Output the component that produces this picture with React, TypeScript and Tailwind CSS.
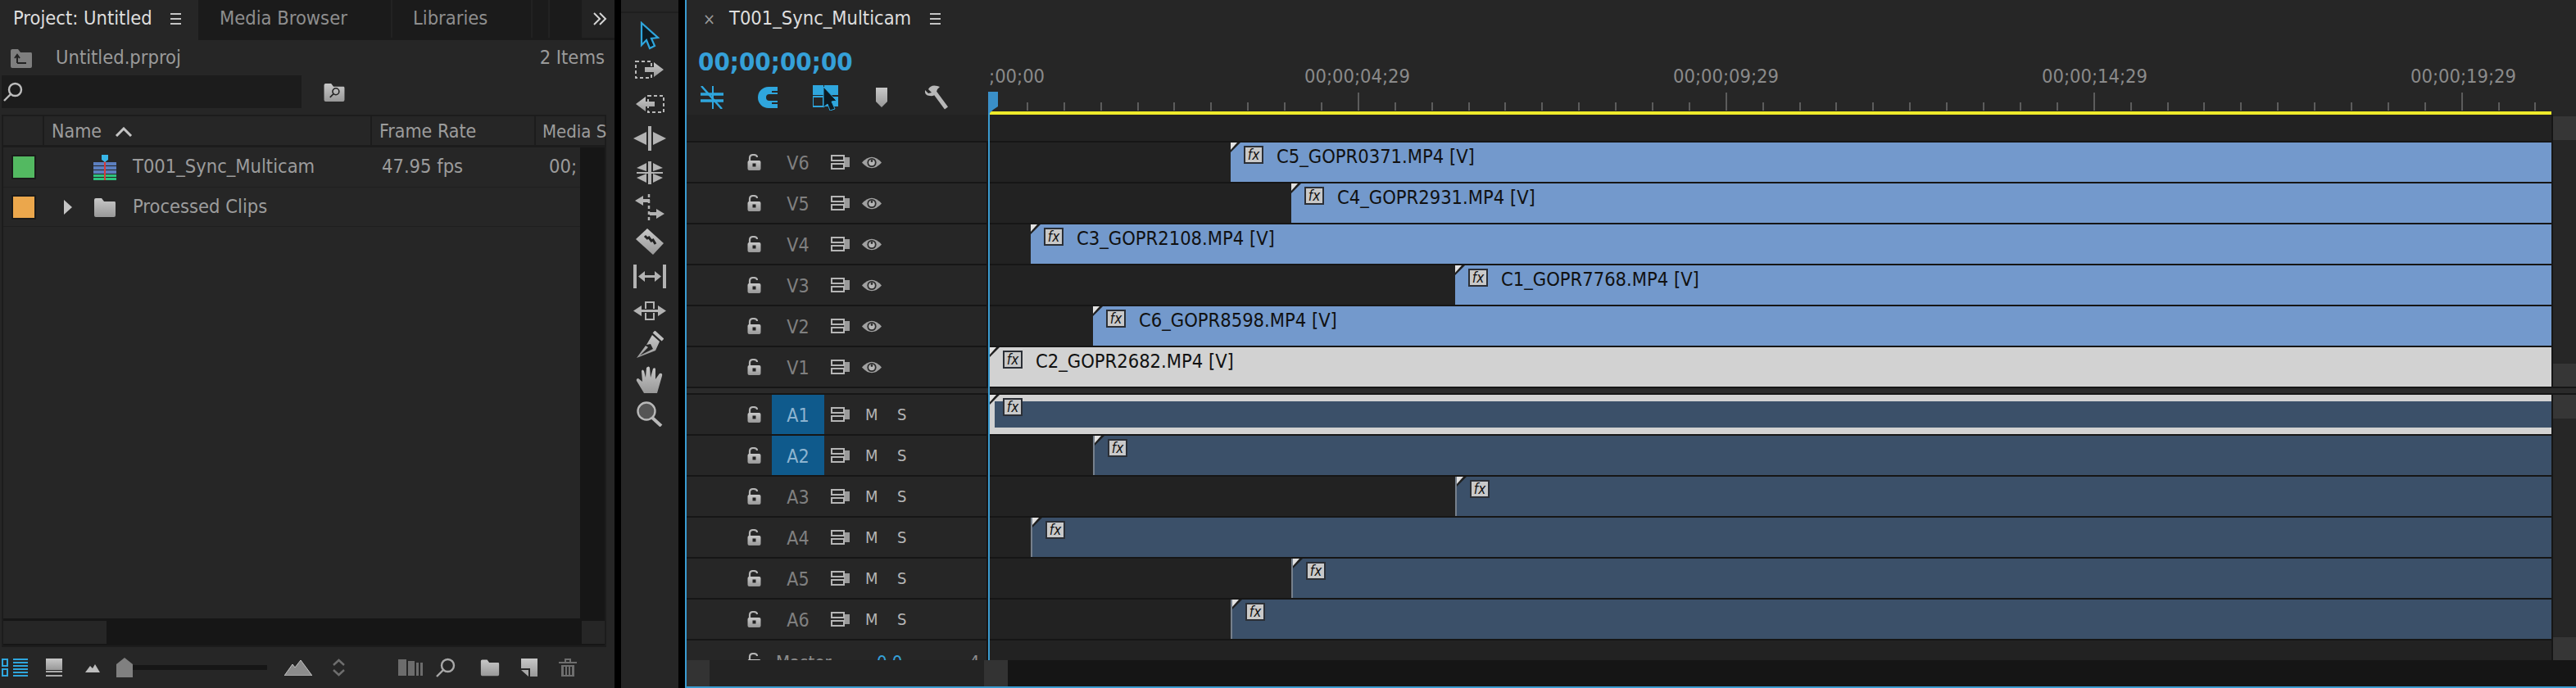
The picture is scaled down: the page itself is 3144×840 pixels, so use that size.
import React from "react";

const grey = "#b2b2b2";
const blue = "#2fa6dd";

const videoTracks = [
  { name: "V6", start: 294, clip: "C5_GOPR0371.MP4 [V]" },
  { name: "V5", start: 368, clip: "C4_GOPR2931.MP4 [V]" },
  { name: "V4", start: 50, clip: "C3_GOPR2108.MP4 [V]" },
  { name: "V3", start: 568, clip: "C1_GOPR7768.MP4 [V]" },
  { name: "V2", start: 126, clip: "C6_GOPR8598.MP4 [V]" },
  { name: "V1", start: 0, clip: "C2_GOPR2682.MP4 [V]", selected: true },
];

const audioTracks = [
  { name: "A1", start: 0, target: true, selected: true },
  { name: "A2", start: 126, target: true },
  { name: "A3", start: 568 },
  { name: "A4", start: 50 },
  { name: "A5", start: 368 },
  { name: "A6", start: 294 },
];

const rulerLabels = ["00;00;04;29", "00;00;09;29", "00;00;14;29", "00;00;19;29"];
const ticks = Array.from({ length: 43 }, (_, i) => i);

function MenuIcon({ className = "" }: { className?: string }) {
  return (
    <div className={"flex h-[14px] w-[13px] flex-col justify-between " + className}>
      <div className="h-[2px] bg-[#c4c4c4]" />
      <div className="h-[2px] bg-[#c4c4c4]" />
      <div className="h-[2px] bg-[#c4c4c4]" />
    </div>
  );
}

function Magnifier({ size = 24, color = "#bdbdbd" }: { size?: number; color?: string }) {
  return (
    <svg width={size} height={size} viewBox="0 0 24 24" fill="none">
      <circle cx="14.5" cy="9.5" r="7.5" stroke={color} strokeWidth="2.4" />
      <path d="M9 15 L1 23" stroke={color} strokeWidth="2.4" />
    </svg>
  );
}

function Folder({ w = 28, h = 24, color = "url(#metal)", children }: { w?: number; h?: number; color?: string; children?: React.ReactNode }) {
  return (
    <svg width={w} height={h} viewBox="0 0 28 24">
      <path d="M1 3 Q1 1 3 1 H10 L13 5 H26 Q27 5 27 7 V22 Q27 24 25 24 H3 Q1 24 1 22 Z" fill={color} />
      {children}
    </svg>
  );
}

function LockIcon() {
  return (
    <svg width="17" height="20" viewBox="0 0 17 20">
      <path d="M3 8 V5 Q3 1 7.5 1 Q12 1 12 4" fill="none" stroke="#b5b5b5" strokeWidth="2.2" />
      <rect x="0.5" y="8" width="16" height="12" rx="2" fill="url(#metal)" />
      <rect x="6.5" y="11.5" width="4" height="4" fill="#222" />
    </svg>
  );
}

function SyncIcon() {
  return (
    <svg width="24" height="18" viewBox="0 0 24 18" fill="none">
      <rect x="16" y="3" width="7" height="12" fill="#9a9a9a" />
      <rect x="1" y="1" width="15" height="6" fill="#262626" stroke="#b5b5b5" strokeWidth="2" />
      <rect x="1" y="11" width="15" height="6" fill="#262626" stroke="#b5b5b5" strokeWidth="2" />
    </svg>
  );
}

function EyeIcon() {
  return (
    <svg width="24" height="17" viewBox="0 0 24 17">
      <path d="M0 8.5 Q12 -5 24 8.5 Q12 22 0 8.5 Z" fill="#a0a0a0" />
      <circle cx="12" cy="8.5" r="5.6" fill="#2a2a2a" />
      <circle cx="12" cy="8.5" r="3.8" fill="#b5b5b5" />
      <circle cx="12" cy="6.5" r="1.4" fill="#2a2a2a" />
    </svg>
  );
}

function FxBadge({ className = "" }: { className?: string }) {
  return (
    <div className={"flex h-[22px] w-[24px] items-center justify-center border-2 border-[#2b2f36] bg-[#c9c9c9] text-[17px] leading-none text-[#111] italic " + className}>
      fx
    </div>
  );
}

function ClipCorner() {
  return (
    <svg className="absolute top-0 left-0" width="12" height="12" viewBox="0 0 12 12">
      <polygon points="0,0 12,0 0,12" fill="#1f1f1f" />
      <polygon points="0,0 8,0 0,9" fill="#e2e2e2" />
    </svg>
  );
}

function VideoClip({ label, selected }: { label: string; selected?: boolean }) {
  return (
    <div className={"relative flex h-full flex-1 items-start pt-[4px] pl-[16px] " + (selected ? "bg-[#d2d2d2]" : "bg-[#7399cc]")}>
      <ClipCorner />
      <FxBadge />
      <span className="ml-[16px] text-[23.5px] leading-[26px] whitespace-nowrap text-[#111]">{label}</span>
    </div>
  );
}

function AudioClip({ selected }: { selected?: boolean }) {
  if (selected) {
    return (
      <div className="relative h-full flex-1 bg-[#d2d2d2] py-[8px] pl-[6px]">
        <div className="h-full bg-[#3b5069]" />
        <ClipCorner />
        <FxBadge className="absolute top-[4px] left-[16px]" />
      </div>
    );
  }
  return (
    <div className="relative h-full flex-1 border-l-2 border-[#76808c] bg-[#3b5069]">
      <ClipCorner />
      <FxBadge className="absolute top-[4px] left-[16px]" />
    </div>
  );
}

function TrackHeader({ name, target, audio }: { name: string; target?: boolean; audio?: boolean }) {
  return (
    <div className="flex h-full w-[368px] shrink-0 items-center border-r-2 border-[#161616] bg-[#262626] pl-[74px]">
      <LockIcon />
      <div className={"ml-[13px] flex h-full w-[64px] items-center justify-center pt-[2px] text-[23px] " + (target ? "bg-[#0f5a8c] text-[#8db4d0]" : "text-[#808080]")}>
        {name}
      </div>
      <div className="ml-[8px]">
        <SyncIcon />
      </div>
      {audio ? (
        <>
          <span className="ml-[18px] w-[15px] text-[20px] text-[#b5b5b5]">M</span>
          <span className="ml-[24px] text-[20px] text-[#b5b5b5]">S</span>
        </>
      ) : (
        <div className="ml-[14px]">
          <EyeIcon />
        </div>
      )}
    </div>
  );
}

function ProjectPanel() {
  return (
    <div className="flex h-full w-[750px] shrink-0 flex-col bg-[#262626]">
      <div className="flex h-[49px] shrink-0 bg-[#1b1b1b] pb-[3px]">
        <div className="-mb-[3px] flex w-[242px] items-center bg-[#262626] pb-[3px] pl-[16px] text-[23.5px] text-[#dedede]">
          Project: Untitled
          <MenuIcon className="ml-[22px]" />
        </div>
        <div className="flex w-[237px] items-center border-r-2 border-[#222] pl-[26px] text-[23.5px] text-[#8e8e8e]">Media Browser</div>
        <div className="flex w-[171px] items-center border-r-2 border-[#222] pl-[25px] text-[23.5px] text-[#8e8e8e]">Libraries</div>
        <div className="w-[21px] border-r-2 border-[#222]" />
        <div className="w-[39px]" />
        <div className="flex w-[40px] items-center bg-[#232323] pl-[14px]">
          <svg width="18" height="16" viewBox="0 0 18 16" fill="none" stroke="#d4d4d4" strokeWidth="2">
            <path d="M1 1 L8 8 L1 15 M8 1 L15 8 L8 15" />
          </svg>
        </div>
      </div>
      <div className="flex h-[43px] shrink-0 items-center pr-[12px] pl-[12px] text-[23.5px] text-[#9a9a9a]">
        <Folder w={28} h={24} color="#7e7e7e">
          <path d="M9 18 H20 M9 18 V9 M6 12 L9 8 L12 12" stroke="#222" strokeWidth="2" fill="none" />
        </Folder>
        <span className="ml-[28px]">Untitled.prproj</span>
        <span className="ml-auto">2 Items</span>
      </div>
      <div className="flex h-[40px] shrink-0 items-center">
        <div className="ml-[2px] flex h-full w-[366px] items-center bg-[#1c1c1c] pl-[2px]">
          <Magnifier />
        </div>
        <div className="ml-[26px]">
          <Folder w={28} h={23} color="url(#metal)">
            <g transform="translate(8 6) scale(0.55)">
              <circle cx="14.5" cy="9.5" r="7.5" stroke="#222" strokeWidth="3" fill="none" />
              <path d="M9 15 L1 23" stroke="#222" strokeWidth="3" />
            </g>
          </Folder>
        </div>
      </div>
      <div className="mt-[8px] ml-[2px] flex h-[650px] w-[738px] shrink-0 flex-col border-2 border-[#1c1c1c]">
        <div className="flex h-[35px] shrink-0 text-[23px] text-[#9c9c9c]">
          <div className="w-[50px] border-r-2 border-[#1c1c1c]" />
          <div className="flex w-[400px] items-center border-r-2 border-[#1c1c1c] pt-[2px] pl-[9px]">
            Name
            <svg className="ml-[16px]" width="22" height="12" viewBox="0 0 22 12" fill="none">
              <path d="M2 11 L11 2 L20 11" stroke="#c4c4c4" strokeWidth="3" />
            </svg>
          </div>
          <div className="flex w-[200px] items-center border-r-2 border-[#1c1c1c] pt-[2px] pl-[9px] whitespace-nowrap">Frame Rate</div>
          <div className="flex min-w-0 flex-1 items-center pt-[2px] pl-[8px] text-[22px] whitespace-nowrap">Media S</div>
        </div>
        <div className="flex h-[3px] shrink-0 bg-[#1c1c1c]" />
        <div className="flex min-h-0 flex-1 bg-[#161616]">
          <div className="w-[704px] shrink-0 bg-[#262626]">
            <div className="flex h-[49px] items-center border-b border-[#1f1f1f] text-[23.5px] text-[#9c9c9c]">
              <div className="ml-[10px] h-[30px] w-[30px] border-2 border-[#1a1a1a] bg-[#53b961]" />
              <svg className="ml-[70px]" width="28" height="32" viewBox="0 0 28 32">
                <rect x="0" y="10" width="28" height="4" fill="#5c7fbf" />
                <rect x="0" y="15" width="28" height="4" fill="#5c7fbf" />
                <rect x="0" y="20" width="28" height="4" fill="#5c7fbf" />
                <rect x="0" y="25" width="28" height="3" fill="#2ec27e" />
                <rect x="0" y="29" width="28" height="3" fill="#2ec27e" />
                <rect x="13" y="8" width="2" height="24" fill="#d83a3a" />
                <path d="M10 1 H18 V7 L14 10 L10 7 Z" fill="#38b6e8" />
              </svg>
              <span className="ml-[20px] w-[304px] shrink-0">T001_Sync_Multicam</span>
              <span className="w-[204px] shrink-0">47.95 fps</span>
              <span>00;</span>
            </div>
            <div className="flex h-[48px] items-center border-b border-[#1f1f1f] text-[23.5px] text-[#9c9c9c]">
              <div className="ml-[10px] h-[30px] w-[30px] border-2 border-[#1a1a1a] bg-[#eba74c]" />
              <svg className="ml-[34px]" width="10" height="18" viewBox="0 0 10 18">
                <path d="M0 0 L10 9 L0 18 Z" fill="#c4c4c4" />
              </svg>
              <div className="ml-[26px]">
                <Folder />
              </div>
              <span className="ml-[20px]">Processed Clips</span>
            </div>
          </div>
        </div>
        <div className="h-[3px] shrink-0 bg-[#161616]" />
        <div className="flex h-[28px] shrink-0 bg-[#161616]">
          <div className="w-[126px] bg-[#262626]" />
          <div className="ml-auto w-[28px] bg-[#262626]" />
        </div>
        <div className="h-[2px] shrink-0 bg-[#161616]" />
      </div>
      <div className="flex min-h-0 flex-1 items-center pl-[2px]">
        <svg width="32" height="22" viewBox="0 0 32 22">
          <rect x="1" y="1" width="6" height="8" fill="none" stroke={blue} strokeWidth="2" />
          <rect x="1" y="13" width="6" height="8" fill="none" stroke={blue} strokeWidth="2" />
          <path d="M14 1 H32 M14 5 H32 M14 9 H32 M14 13 H32 M14 17 H32 M14 21 H32" stroke={blue} strokeWidth="2" />
        </svg>
        <svg className="ml-[22px]" width="20" height="22" viewBox="0 0 20 22">
          <rect width="20" height="14" fill="url(#metal)" />
          <rect y="15" width="20" height="2" fill="#aaa" />
          <rect y="20" width="20" height="2" fill="#aaa" />
        </svg>
        <svg className="ml-[28px]" width="18" height="12" viewBox="0 0 18 12">
          <path d="M0 12 L6 4 L9 7 L12 2 L18 12 Z" fill="#bdbdbd" />
        </svg>
        <svg className="ml-[20px]" width="20" height="24" viewBox="0 0 20 24">
          <path d="M0 8 L10 0 L20 8 V24 H0 Z" fill="#808080" />
        </svg>
        <div className="h-[6px] w-[164px] bg-[#161616]" />
        <svg className="ml-[21px]" width="34" height="20" viewBox="0 0 34 20">
          <path d="M0 20 L10 6 L13 10 L20 1 L34 20 Z" fill="#8c8c8c" stroke="#c4c4c4" strokeWidth="1" />
        </svg>
        <svg className="ml-[24px]" width="17" height="22" viewBox="0 0 17 22" fill="none">
          <path d="M2 8 L8.5 2 L15 8 M2 14 L8.5 20 L15 14" stroke="#6e6e6e" strokeWidth="2.4" />
        </svg>
        <svg className="ml-[64px]" width="30" height="20" viewBox="0 0 30 20">
          <rect x="0" y="0" width="10" height="20" fill="#6c6c6c" />
          <rect x="12" y="2" width="8" height="18" fill="#6c6c6c" />
          <rect x="22" y="4" width="3" height="16" fill="#6c6c6c" />
          <rect x="27" y="4" width="3" height="16" fill="#6c6c6c" />
        </svg>
        <div className="ml-[16px]">
          <Magnifier size={24} color="#a8a8a8" />
        </div>
        <div className="ml-[30px]">
          <Folder w={24} h={22} />
        </div>
        <svg className="ml-[26px]" width="20" height="22" viewBox="0 0 20 22">
          <path d="M0 0 H20 V22 H11 V12 H0 Z" fill="url(#metal)" />
          <path d="M0 14 H9 V22 Z" fill="#a8a8a8" />
        </svg>
        <svg className="ml-[26px]" width="22" height="22" viewBox="0 0 22 22" fill="#6e6e6e">
          <rect x="0" y="4" width="22" height="2" />
          <path d="M8 4 V1 H14 V4" fill="none" stroke="#6e6e6e" strokeWidth="2" />
          <path d="M3 8 H19 V22 H3 Z M6 10 V20 H8 V10 Z M10 10 V20 H12 V10 Z M14 10 V20 H16 V10 Z" fillRule="evenodd" />
        </svg>
      </div>
    </div>
  );
}

function ToolsPanel() {
  const tools = [
    <svg key="select" width="24" height="35" viewBox="0 0 24 35">
      <path d="M2 2 L22 20 L14 21 L18 30 L12 33 L8 23 L2 29 Z" fill="#0c1a22" stroke={blue} strokeWidth="2.2" />
    </svg>,
    <svg key="fwd" width="36" height="22" viewBox="0 0 36 22">
      <rect x="1" y="1" width="19" height="20" fill="none" stroke="#b8b8b8" strokeWidth="2" strokeDasharray="4 3" />
      <path d="M12 8 H23 V2 L35 11 L23 20 V14 H12 Z" fill="url(#metal)" />
    </svg>,
    <svg key="back" width="36" height="22" viewBox="0 0 36 22">
      <rect x="16" y="1" width="19" height="20" fill="none" stroke="#b8b8b8" strokeWidth="2" strokeDasharray="4 3" />
      <path d="M24 8 H13 V2 L1 11 L13 20 V14 H24 Z" fill="url(#metal)" />
    </svg>,
    <svg key="ripple" width="40" height="30" viewBox="0 0 40 30" fill={grey}>
      <rect x="18" y="0" width="4" height="30" />
      <path d="M0 15 L16 7 V23 Z M40 15 L24 7 V23 Z" />
    </svg>,
    <svg key="rolling" width="32" height="28" viewBox="0 0 32 28" fill={grey}>
      <rect x="14" y="0" width="4" height="28" />
      <rect x="0" y="13" width="32" height="2" />
      <path d="M0 8 L12 2 V12 Z M32 8 L20 2 V12 Z M0 20 L12 15 V26 Z M32 20 L20 15 V26 Z" />
    </svg>,
    <svg key="rate" width="36" height="32" viewBox="0 0 36 32" fill={grey}>
      <path d="M0 8 L10 2 V6 H18 V10 H10 V14 Z M36 24 L26 18 V22 H18 V26 H26 V30 Z" />
      <path d="M17 0 V32" stroke={grey} strokeWidth="2.5" strokeDasharray="4 3" fill="none" />
    </svg>,
    <svg key="razor" width="34" height="32" viewBox="0 0 34 32">
      <path d="M14 0 L34 18 L21 32 L0 13 Z" fill="url(#metal)" />
      <path d="M11 9 L14 12 L16 11 L19 15 L21 14 L24 19" stroke="#222" strokeWidth="3" fill="none" />
    </svg>,
    <svg key="slip" width="40" height="29" viewBox="0 0 40 29" fill={grey}>
      <rect x="0" y="0" width="4" height="29" />
      <rect x="36" y="0" width="4" height="29" />
      <path d="M6 14.5 L14 8 V13 H26 V8 L34 14.5 L26 21 V16 H14 V21 Z" />
    </svg>,
    <svg key="slide" width="40" height="23" viewBox="0 0 40 23" fill={grey}>
      <path d="M0 11.5 L10 5 V10 H30 V5 L40 11.5 L30 18 V13 H10 V18 Z" />
      <path d="M15 9 V1 H25 V9 M15 14 V22 H25 V14" fill="none" stroke={grey} strokeWidth="2" />
    </svg>,
    <svg key="pen" width="34" height="34" viewBox="0 0 34 34">
      <path d="M22 1 L33 11" stroke="#c0c0c0" strokeWidth="4" />
      <path d="M20 5 L29 13 L24 24 L1 33 L12 18 L15 20 L5 30 L21 22 L18 16 L13 17 Z" fill="url(#metal)" />
    </svg>,
    <svg key="hand" width="34" height="33" viewBox="0 0 34 33">
      <path d="M10 33 L1 18 Q0 15 3 15 L8 19 L7 6 Q8 3 10 6 L12 14 L13 2 Q16 -1 17 2 L18 14 L21 3 Q24 1 24 4 L24 16 L29 9 Q33 8 32 12 L26 33 Z" fill="url(#metal)" />
    </svg>,
    <svg key="zoom" width="32" height="31" viewBox="0 0 32 31">
      <path d="M18 19 L30 30" stroke="#b8b8b8" strokeWidth="4" />
      <circle cx="12" cy="12" r="10.5" fill="#555" stroke="#b8b8b8" strokeWidth="2.4" />
    </svg>,
  ];
  return (
    <div className="flex h-full w-[70px] shrink-0 flex-col bg-[#262626]">
      <div className="mb-[6px] h-[16px] shrink-0 border-b-2 border-[#1f1f1f]" />
      {tools.map((tool, i) => (
        <div key={i} className="flex h-[42px] shrink-0 items-center justify-center">
          {tool}
        </div>
      ))}
    </div>
  );
}

function TimelineHeader() {
  return (
    <div className="flex h-[140px] shrink-0 bg-[#262626]">
      <div className="flex w-[368px] shrink-0 flex-col">
        <div className="flex h-[45px] shrink-0 items-center pl-[20px] text-[23.5px] text-[#dedede]">
          <span className="w-[32px] text-[20px] text-[#9a9a9a]">×</span>
          T001_Sync_Multicam
          <MenuIcon className="ml-[23px]" />
        </div>
        <div className="h-[56px] shrink-0 pt-[2px] pl-[14px] text-[31px] leading-[56px] font-semibold text-[#35a0d8]">00;00;00;00</div>
        <div className="flex h-[36px] items-center pl-[17px]">
          <svg width="28" height="28" viewBox="0 0 28 28" fill="none" stroke={blue}>
            <path d="M0 10 H28 M0 18 H28" strokeWidth="3.5" />
            <path d="M15 0 V28" strokeWidth="2" />
            <path d="M1 0 L26 28" strokeWidth="2.5" />
          </svg>
          <svg className="ml-[41px]" width="25" height="28" viewBox="0 0 25 28">
            <path d="M25 1 H14 A13 13 0 0 0 14 27 H25 V18 H15 A4 4 0 0 1 15 10 H25 Z" fill={blue} />
            <rect x="18" y="6" width="7" height="2" fill="#262626" />
            <rect x="18" y="20" width="7" height="2" fill="#262626" />
          </svg>
          <svg className="ml-[43px]" width="31" height="32" viewBox="0 0 31 32">
            <rect x="0" y="1" width="13" height="12" fill={blue} />
            <rect x="14" y="1" width="17" height="12" fill={blue} />
            <rect x="0" y="15" width="13" height="12" fill="none" stroke={blue} strokeWidth="2" />
            <rect x="14" y="15" width="17" height="12" fill={blue} />
            <path d="M13 3 L29 20 L23 21 L27 30 L21 32 L18 24 L13 28 Z" fill="#0c1a22" stroke={blue} strokeWidth="1" />
          </svg>
          <svg className="ml-[46px]" width="14" height="24" viewBox="0 0 14 24">
            <path d="M0 0 H14 V17 L7 24 L0 17 Z" fill="url(#metal)" />
          </svg>
          <svg className="ml-[45px]" width="30" height="32" viewBox="0 0 30 32" fill="none">
            <path d="M13 10 L27 29" stroke="#b8b8b8" strokeWidth="5" />
            <path d="M16 2 Q8 0 5 6 L9 10 L5 11 L1 7 Q0 14 7 14 Q14 15 15 9 Q16 5 19 3 Z" fill="#b8b8b8" />
          </svg>
        </div>
      </div>
      <div className="flex min-w-0 flex-1 flex-col justify-end">
        <div className="flex text-[23.5px] leading-[28px] whitespace-nowrap text-[#8a8a8a]">
          <div className="w-[386px] shrink-0 pl-[1px]">;00;00</div>
          {rulerLabels.map((label) => (
            <div key={label} className="w-[450px] shrink-0">
              {label}
            </div>
          ))}
        </div>
        <div className="mt-[6px] flex h-[22px] items-end pl-[2px]">
          {ticks.map((i) => (
            <div key={i} className="flex h-full w-[44.9px] shrink-0 items-end">
              <div className={i % 10 === 0 ? "h-[22px] w-[2px] bg-[#5c5c5c]" : "h-[10px] w-[2px] bg-[#5c5c5c]"} />
            </div>
          ))}
        </div>
        <div className="mt-[1px] mr-[30px] ml-[2px] h-[4px] bg-[#eeea2b]" />
      </div>
    </div>
  );
}

function VScroll({ top, bottom }: { top?: boolean; bottom?: boolean }) {
  return (
    <div className={"flex w-[30px] shrink-0 flex-col justify-between border-l-2 border-[#161616] bg-[#262626] " + (top ? "border-t-2 " : "") + (bottom ? "border-b-2 " : "")}>
      <div className={"h-[29px] bg-[#363636] " + (bottom ? "mt-[2px]" : "")} />
      <div className="h-[28px] bg-[#363636]" />
    </div>
  );
}

function Timeline() {
  return (
    <div className="relative flex h-full min-w-0 flex-1 flex-col border-b-2 border-l-2 border-[#3a9bd0] bg-[#262626]">
      <TimelineHeader />

      <div className="flex h-[334px] shrink-0">
        <div className="min-w-0 flex-1">
          <div className="h-[34px] border-b-2 border-[#161616] bg-[#222]" />
          {videoTracks.map((t) => (
            <div key={t.name} className="flex h-[50px] border-b-2 border-[#161616]">
              <TrackHeader name={t.name} />
              <div className="flex min-w-0 flex-1 bg-[#222] pl-[2px]">
                <div className="shrink-0" style={{ width: t.start }} />
                <VideoClip label={t.clip} selected={t.selected} />
              </div>
            </div>
          ))}
        </div>
        <VScroll bottom />
      </div>

      <div className="h-[6px] shrink-0 bg-[#2a2a2a]" />

      <div className="flex h-[326px] shrink-0">
        <div className="min-w-0 flex-1 border-t-2 border-[#161616]">
          {audioTracks.map((t) => (
            <div key={t.name} className="flex h-[50px] border-b-2 border-[#161616]">
              <TrackHeader name={t.name} target={t.target} audio />
              <div className="flex min-w-0 flex-1 bg-[#222] pl-[2px]">
                <div className="shrink-0" style={{ width: t.start }} />
                <AudioClip selected={t.selected} />
              </div>
            </div>
          ))}
          <div className="flex h-[24px] overflow-hidden">
            <div className="flex h-full w-[368px] shrink-0 items-start overflow-hidden border-r-2 border-[#161616] bg-[#262626] pt-[15px] pl-[74px] text-[22px] leading-[24px] text-[#8c8c8c]">
              <LockIcon />
              <span className="ml-[18px] w-[123px] shrink-0">Master</span>
              <span className="w-[113px] shrink-0 text-[#35a0d8]">0.0</span>
              <span>4</span>
            </div>
            <div className="flex-1 bg-[#222]" />
          </div>
        </div>
        <VScroll top />
      </div>

      <div className="flex h-[32px] shrink-0 bg-[#151515]">
        <div className="flex w-[392px] justify-between bg-[#232323]">
          <div className="w-[28px] bg-[#333]" />
          <div className="w-[29px] bg-[#333]" />
        </div>
      </div>

      {/* playhead sits over the tracks */}
      <div className="absolute top-[135px] left-[368px] h-[671px] w-[2px] bg-[#3a9bd0]" />
      <svg className="absolute top-[112px] left-[368px]" width="12" height="26" viewBox="0 0 12 26">
        <path d="M0 0 H12 V18 L6 22 L2 26 H0 Z" fill="#3a8fc8" />
      </svg>
    </div>
  );
}

export default function App() {
  return (
    <div className="flex h-[840px] w-[3144px] overflow-hidden bg-black [font-family:'DejaVu_Sans_Condensed','DejaVu_Sans',sans-serif]">
      <svg className="absolute h-0 w-0">
        <defs>
          <linearGradient id="metal" x1="0" y1="0" x2="0" y2="1">
            <stop offset="0" stopColor="#c8c8c8" />
            <stop offset="1" stopColor="#989898" />
          </linearGradient>
        </defs>
      </svg>
      <ProjectPanel />
      <div className="ml-[8px]">
        <ToolsPanel />
      </div>
      <div className="ml-[8px] flex min-w-0 flex-1">
        <Timeline />
      </div>
    </div>
  );
}
